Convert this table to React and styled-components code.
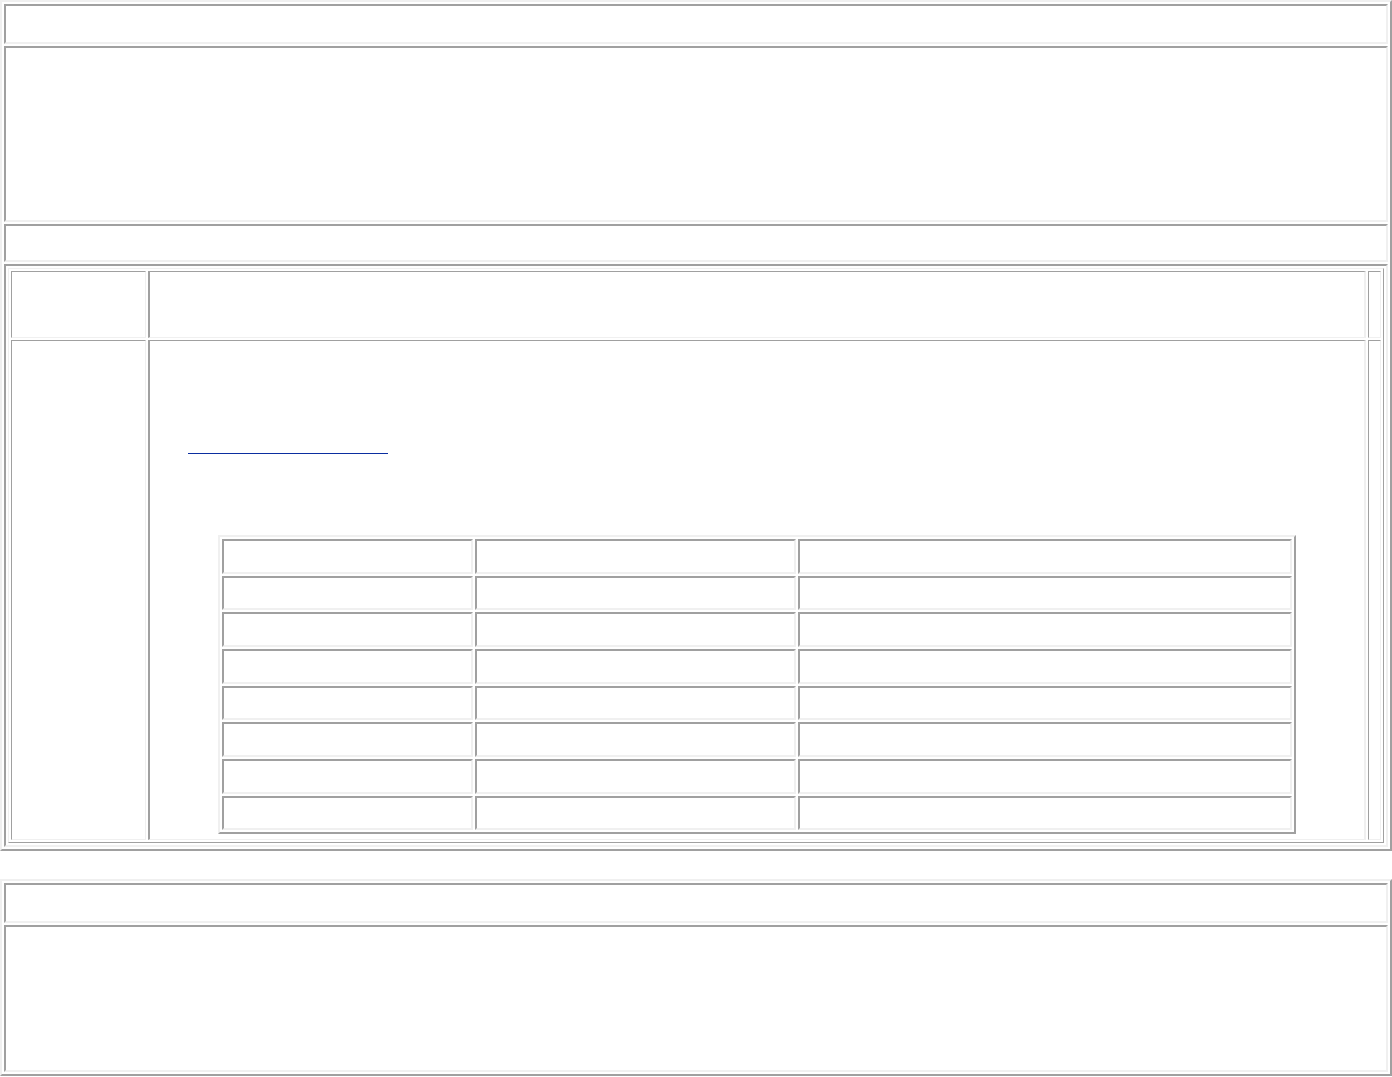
import React from 'react'
import styled, { createGlobalStyle } from 'styled-components';

const LIGHT = '#f0f0f0';
const DARK = '#a0a0a0';

const GlobalStyle = createGlobalStyle`
*{
    box-sizing: border-box;
}
body{
    margin: 0;
    background: #ffffff;
    font-family: "Liberation Serif", serif;
}
`;

const dataRows = [35, 34, 35, 35, 34, 35, 35, 34];

const App = () =>{
    return(
        <>
        <GlobalStyle/>
        <Frame $w={1392} $b={2}>
            <tbody>
                <tr><Cell $h={40}></Cell></tr>
                <tr><Cell $h={176}></Cell></tr>
                <tr><Cell $h={38}></Cell></tr>
                <tr>
                    <Cell $h={583} $pad={2}>
                        <Frame $w={1376} $b={1}>
                            <tbody>
                                <tr>
                                    <Cell $w={135} $h={67} $bw={1}></Cell>
                                    <Cell $w={1218} $h={67} $bw="1px 2px 1px 2px"></Cell>
                                    <Cell $w={13} $h={67} $bw={1}></Cell>
                                </tr>
                                <tr>
                                    <Cell $w={135} $h={500} $bw={1}></Cell>
                                    <Cell $w={1218} $h={500} $bw="1px 2px 1px 2px">
                                        <Body>
                                            <Link href="#">&nbsp;</Link>
                                            <DataTable $w={1078} $b={2}>
                                                <tbody>
                                                    {dataRows.map((h, i) =>(
                                                        <tr key={i}>
                                                            <Cell $w={251} $h={h}></Cell>
                                                            <Cell $w={321} $h={h}></Cell>
                                                            <Cell $w={494} $h={h}></Cell>
                                                        </tr>
                                                    ))}
                                                </tbody>
                                            </DataTable>
                                        </Body>
                                    </Cell>
                                    <Cell $w={13} $h={500} $bw={1}></Cell>
                                </tr>
                            </tbody>
                        </Frame>
                    </Cell>
                </tr>
            </tbody>
        </Frame>

        <Lower $w={1392} $b={2}>
            <tbody>
                <tr><Cell $h={40}></Cell></tr>
                <tr><Cell $h={147}></Cell></tr>
            </tbody>
        </Lower>
        </>
    )
};

const Frame = styled.table`
width: ${p => p.$w}px;
border-collapse: separate;
border-spacing: 2px;
table-layout: fixed;
border-style: solid;
border-width: ${p => p.$b}px;
border-color: ${LIGHT} ${DARK} ${DARK} ${LIGHT};
`;

const Lower = styled(Frame)`
margin-top: 28px;
`;

const DataTable = styled(Frame)`
margin-left: 68px;
margin-top: 81px;
`;

const Cell = styled.td`
${p => p.$w ? `width: ${p.$w}px;` : ''}
height: ${p => p.$h}px;
padding: ${p => p.$pad || 0}px;
vertical-align: top;
border-style: solid;
border-width: ${p => typeof p.$bw === 'string' ? p.$bw : `${p.$bw || 2}px`};
border-color: ${DARK} ${LIGHT} ${LIGHT} ${DARK};
`;

const Body = styled.div`
padding-top: 96px;
`;

const Link = styled.a`
display: block;
width: 200px;
height: 17px;
margin-left: 38px;
border-bottom: 1px solid #0b2ea0;
text-decoration: none;
`;

export default App;
